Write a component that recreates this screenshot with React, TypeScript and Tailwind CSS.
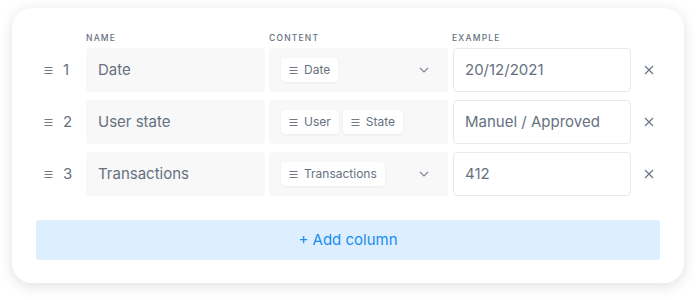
import React from "react";

const Lines = ({ className = "" }: { className?: string }) => (
  <svg width="9" height="9" viewBox="0 0 9 9" className={className} fill="none" stroke="currentColor" strokeWidth="1">
    <path d="M0.5 1.5H8.5M0.5 4.5H8.5M0.5 7.5H8.5" />
  </svg>
);

const Chip = ({ label }: { label: string }) => (
  <div className="flex h-6 items-center gap-[6px] rounded-[4px] bg-white px-[8px] text-[12px] text-[#66717f] shadow-[0_1px_3px_rgba(0,0,0,0.06)]">
    <Lines className="text-[#717b88]" />
    <span>{label}</span>
  </div>
);

const Chevron = () => (
  <svg width="10" height="6" viewBox="0 0 10 6" fill="none" stroke="#7b8594" strokeWidth="1.1">
    <path d="M1 1L5 5L9 1" />
  </svg>
);

const XIcon = () => (
  <svg width="10" height="10" viewBox="0 0 10 10" fill="none" stroke="#66717f" strokeWidth="1.1">
    <path d="M1 1L9 9M9 1L1 9" />
  </svg>
);

const rows = [
  { n: 1, name: "Date", chips: ["Date"], chevron: true, example: "20/12/2021" },
  { n: 2, name: "User state", chips: ["User", "State"], chevron: false, example: "Manuel / Approved" },
  { n: 3, name: "Transactions", chips: ["Transactions"], chevron: true, example: "412" },
];

const cols = "grid grid-cols-[46px_179px_179px_179px_1fr] gap-x-[4px]";

export default function App() {
  return (
    <div className="h-[300px] w-[696px] bg-white pt-[8px] pl-[12px]" style={{ fontFamily: "Inter, 'Noto Sans', sans-serif" }}>
      <div className="h-[275px] w-[672px] rounded-[20px] bg-white px-[24px] pt-[24px] shadow-[0_3px_14px_rgba(0,0,0,0.13)]">
        <div className={`${cols} h-[12px] items-center`}>
          <div />
          <div className="text-[8.5px] font-medium leading-[12px] tracking-[1.2px] text-[#66717f]">NAME</div>
          <div className="text-[8.5px] font-medium leading-[12px] tracking-[1.2px] text-[#66717f]">CONTENT</div>
          <div className="text-[8.5px] font-medium leading-[12px] tracking-[1.2px] text-[#66717f]">EXAMPLE</div>
          <div />
        </div>
        <div className="mt-[4px] flex flex-col gap-[8px]">
          {rows.map((r) => (
            <div key={r.n} className={`${cols} h-[44px]`}>
              <div className="flex items-center gap-[10px] pl-[8px] text-[15px] text-[#66717f]">
                <Lines className="text-[#717b88]" />
                <span>{r.n}</span>
              </div>
              <div className="flex items-center rounded-[4px] bg-[#f8f8f9] pl-[12px] text-[15px] text-[#66717f]">
                {r.name}
              </div>
              <div className="flex items-center justify-between rounded-[4px] bg-[#f8f8f9] pl-[12px] pr-[19px]">
                <div className="flex gap-[4px]">
                  {r.chips.map((c) => (
                    <Chip key={c} label={c} />
                  ))}
                </div>
                {r.chevron && <Chevron />}
              </div>
              <div className="ml-[1px] flex items-center rounded-[4px] border border-[#e8e9ec] bg-white pl-[11px] text-[15px] text-[#66717f]">
                {r.example}
              </div>
              <div className="flex items-center pl-[9px]">
                <XIcon />
              </div>
            </div>
          ))}
        </div>
        <div className="mt-[24px] flex h-[40px] w-[624px] items-center justify-center rounded-[4px] bg-[#ddeffe] text-[15px] text-[#1a8cf0]">
          + Add column
        </div>
      </div>
    </div>
  );
}
